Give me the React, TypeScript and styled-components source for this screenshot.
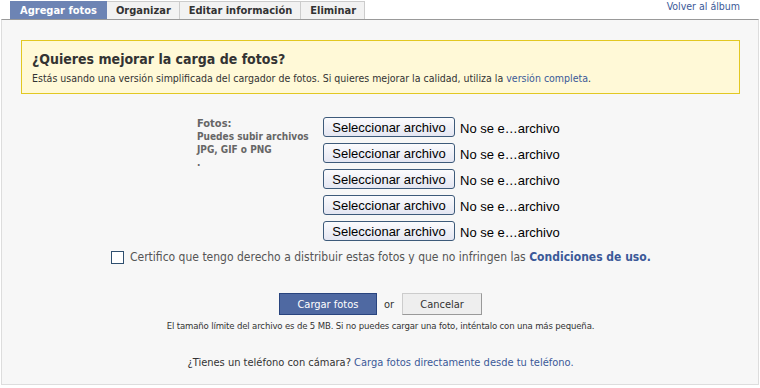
import React from "react";
import styled, { createGlobalStyle } from "styled-components";

const Global = createGlobalStyle`
  html, body { margin: 0; padding: 0; background: #fff; }
  body { font-family: "DejaVu Sans Condensed", "DejaVu Sans", sans-serif; font-size: 11px; color: #333; }
  * { box-sizing: border-box; }
`;

const Page = styled.div`
  width: 760px;
  height: 388px;
  display: flex;
  flex-direction: column;
  padding: 0 1px 0 1px;
`;

const TabBar = styled.div`
  display: flex;
  align-items: flex-end;
  height: 19px;
  padding-left: 9px;
  padding-right: 19px;
`;

const Tab = styled.div<{ $active?: boolean }>`
  height: 18px;
  display: flex;
  align-items: center;
  padding: 0 ${(p) => (p.$active ? 9 : 8)}px 0 9px;
  font-weight: bold;
  font-size: 11px;
  color: ${(p) => (p.$active ? "#fff" : "#333")};
  background: ${(p) => (p.$active ? "#6d84b4" : "#f2f2f2")};
  border: 1px solid ${(p) => (p.$active ? "#6d84b4" : "#ccc")};
  border-bottom: none;
  border-left: ${(p) => (p.$active ? "1px solid #6d84b4" : "none")};
`;

const Spacer = styled.div`
  flex: 1;
`;

const BackLink = styled.a`
  align-self: flex-start;
  color: #3b5998;
  font-size: 10.5px;
  text-decoration: none;
`;

const Panel = styled.div`
  flex: 1;
  margin-bottom: 3px;
  background: #f7f7f7;
  border: 1px solid #ddd;
  border-top: 1px solid #999;
  display: flex;
  flex-direction: column;
  padding: 20px 18px 0 19px;
`;

const Notice = styled.div`
  background: #fff9d7;
  border: 1px solid #e2c822;
  padding: 10px 10px 8px 10px;
`;

const NoticeTitle = styled.div`
  font-size: 14px;
  line-height: 16px;
  font-weight: bold;
  color: #333;
  margin-bottom: 5px;
`;

const NoticeText = styled.div`
  font-size: 10.5px;
  line-height: 13px;
  color: #333;
`;

const Link = styled.a<{ $bold?: boolean }>`
  color: #3b5998;
  text-decoration: none;
  font-weight: ${(p) => (p.$bold ? "bold" : "normal")};
`;

const UploadArea = styled.div`
  display: flex;
  justify-content: flex-start;
  padding-left: 176px;
  margin-top: 23px;
`;

const Label = styled.div`
  width: 126px;
  color: #666;
  font-weight: bold;
  font-size: 10px;
  line-height: 13px;
`;

const LabelTitle = styled.div`
  font-size: 11px;
  line-height: 13px;
`;

const Inputs = styled.div`
  display: flex;
  flex-direction: column;
  gap: 6px;
`;

const FileRow = styled.div`
  display: flex;
  align-items: center;
  height: 20px;
`;

const FileButton = styled.button`
  width: 132px;
  height: 20px;
  padding: 0;
  border: 1px solid #3d5a7a;
  border-radius: 3px;
  background: linear-gradient(#fbfbfd, #e4e6f2);
  font-family: "Liberation Sans", Arial, sans-serif;
  font-size: 13px;
  color: #000;
`;

const FileName = styled.span`
  margin-left: 5px;
  font-family: "Liberation Sans", Arial, sans-serif;
  font-size: 13px;
  color: #000;
  margin-top: 3px;
`;

const CertRow = styled.label`
  display: flex;
  align-items: center;
  margin-top: 9px;
  margin-left: 90px;
  font-size: 12px;
  color: #555;
`;

const Box = styled.span`
  width: 13px;
  height: 13px;
  border: 1px solid #2f4f6f;
  background: #fff;
  margin-right: 6px;
`;

const Actions = styled.div`
  display: flex;
  justify-content: center;
  align-items: center;
  margin-top: 29px;
`;

const Primary = styled.button`
  width: 98px;
  height: 22px;
  border: 1px solid #29447e;
  background: #4f69a2;
  color: #fff;
  font-family: inherit;
  font-size: 11px;
  padding: 0;
`;

const Or = styled.span`
  margin: 0 8px 0 7px;
  font-size: 11px;
  color: #333;
`;

const Secondary = styled.button`
  width: 80px;
  height: 22px;
  border: 1px solid #ccc;
  border-right-color: #999;
  border-bottom-color: #999;
  background: #eee;
  color: #333;
  font-family: inherit;
  font-size: 11px;
  padding: 0;
`;

const Note = styled.div`
  text-align: center;
  font-size: 9.5px;
  letter-spacing: -0.15px;
  color: #333;
  margin-top: 5px;
`;

const Phone = styled.div`
  text-align: center;
  font-size: 11px;
  color: #333;
  margin-top: 25px;
`;

export default function App() {
  return (
    <>
      <Global />
      <Page>
        <TabBar>
          <Tab $active>Agregar fotos</Tab>
          <Tab>Organizar</Tab>
          <Tab>Editar información</Tab>
          <Tab>Eliminar</Tab>
          <Spacer />
          <BackLink href="#">Volver al álbum</BackLink>
        </TabBar>
        <Panel>
          <Notice>
            <NoticeTitle>¿Quieres mejorar la carga de fotos?</NoticeTitle>
            <NoticeText>
              Estás usando una versión simplificada del cargador de fotos. Si quieres mejorar la calidad, utiliza la{" "}
              <Link href="#">versión completa</Link>.
            </NoticeText>
          </Notice>
          <UploadArea>
            <Label>
              <LabelTitle>Fotos:</LabelTitle>
              Puedes subir archivos
              <br />
              JPG, GIF o PNG
              <br />.
            </Label>
            <Inputs>
              {[0, 1, 2, 3, 4].map((i) => (
                <FileRow key={i}>
                  <FileButton>Seleccionar archivo</FileButton>
                  <FileName>No se e…archivo</FileName>
                </FileRow>
              ))}
            </Inputs>
          </UploadArea>
          <CertRow>
            <Box />
            <span>
              Certifico que tengo derecho a distribuir estas fotos y que no infringen las{" "}
              <Link href="#" $bold>
                Condiciones de uso.
              </Link>
            </span>
          </CertRow>
          <Actions>
            <Primary>Cargar fotos</Primary>
            <Or>or</Or>
            <Secondary>Cancelar</Secondary>
          </Actions>
          <Note>
            El tamaño límite del archivo es de 5 MB. Si no puedes cargar una foto, inténtalo con una más pequeña.
          </Note>
          <Phone>
            ¿Tienes un teléfono con cámara? <Link href="#">Carga fotos directamente desde tu teléfono.</Link>
          </Phone>
        </Panel>
      </Page>
    </>
  );
}
